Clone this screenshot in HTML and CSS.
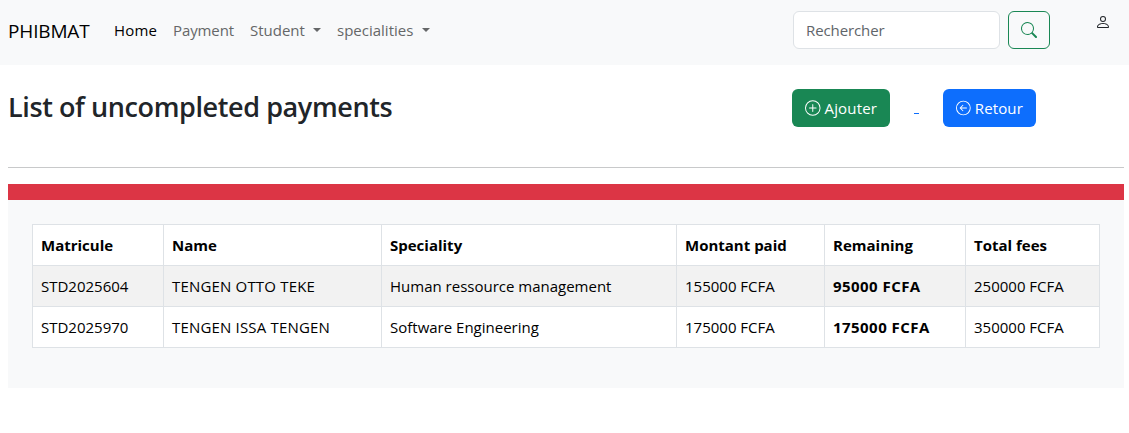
FILE: index.html
```html
<!DOCTYPE html>
<html lang="en">
<head>
<meta charset="utf-8">
<title>PHIBMAT</title>
<link rel="stylesheet" href="styles.css">
</head>
<body>
<nav class="navbar">
  <a class="brand">PHIBMAT</a>
  <div class="links">
    <a class="link active link-home">Home</a>
    <a class="link link-payment">Payment</a>
    <a class="link link-student">Student<i class="caret"></i></a>
    <a class="link">specialities<i class="caret"></i></a>
  </div>
  <form class="search">
    <div class="field">Rechercher</div>
    <button class="btn btn-search" type="button" aria-label="Rechercher">
      <svg width="16" height="16" viewBox="0 0 16 16" fill="currentColor"><path d="M11.742 10.344a6.5 6.5 0 1 0-1.397 1.398h-.001q.044.06.098.115l3.85 3.85a1 1 0 0 0 1.415-1.414l-3.85-3.85a1 1 0 0 0-.115-.1zM12 6.5a5.5 5.5 0 1 1-11 0 5.5 5.5 0 0 1 11 0"/></svg>
    </button>
  </form>
  <a class="user" aria-label="Account">
    <svg width="16" height="16" viewBox="0 0 16 16" fill="currentColor"><path d="M8 8a3 3 0 1 0 0-6 3 3 0 0 0 0 6m2-3a2 2 0 1 1-4 0 2 2 0 0 1 4 0m4 8c0 1-1 1-1 1H3s-1 0-1-1 1-4 6-4 6 3 6 4m-1-.004c-.001-.246-.154-.986-.832-1.664C11.516 10.68 10.289 10 8 10s-3.516.68-4.168 1.332c-.678.678-.83 1.418-.832 1.664z"/></svg>
  </a>
</nav>
<main class="page">
  <header class="head">
    <h1 class="title">List of uncompleted payments</h1>
    <div class="actions">
      <a class="btn btn-add"><svg width="16" height="16" viewBox="0 0 16 16" fill="currentColor"><path d="M8 15A7 7 0 1 1 8 1a7 7 0 0 1 0 14m0 1A8 8 0 1 0 8 0a8 8 0 0 0 0 16"/><path d="M8 4a.5.5 0 0 1 .5.5v3h3a.5.5 0 0 1 0 1h-3v3a.5.5 0 0 1-1 0v-3h-3a.5.5 0 0 1 0-1h3v-3A.5.5 0 0 1 8 4"/></svg><span>Ajouter</span></a>
      <a class="gap-link"></a>
      <a class="btn btn-back"><svg width="16" height="16" viewBox="0 0 16 16" fill="currentColor"><path fill-rule="evenodd" d="M1 8a7 7 0 1 0 14 0A7 7 0 0 0 1 8m15 0A8 8 0 1 1 0 8a8 8 0 0 1 16 0m-4.500-.5a.5.5 0 0 1 0 1H5.707l2.147 2.146a.5.5 0 0 1-.708.708l-3-3a.5.5 0 0 1 0-.708l3-3a.5.5 0 1 1 .708.708L5.707 7.500z"/></svg><span>Retour</span></a>
    </div>
  </header>
  <hr class="rule">
  <div class="bar"></div>
  <section class="panel">
    <table class="table">
      <colgroup><col class="c1"><col class="c2"><col class="c3"><col class="c4"><col class="c5"><col class="c6"></colgroup>
      <thead><tr><th>Matricule</th><th>Name</th><th>Speciality</th><th>Montant paid</th><th>Remaining</th><th>Total fees</th></tr></thead>
      <tbody>
        <tr class="odd"><td>STD2025604</td><td class="name">TENGEN OTTO TEKE</td><td>Human ressource management</td><td>155000 FCFA</td><td class="due">95000 FCFA</td><td>250000 FCFA</td></tr>
        <tr><td>STD2025970</td><td class="name">TENGEN ISSA TENGEN</td><td>Software Engineering</td><td>175000 FCFA</td><td class="due">175000 FCFA</td><td>350000 FCFA</td></tr>
      </tbody>
    </table>
  </section>
</main>
</body>
</html>
```
FILE: styles.css
```css
* { box-sizing: border-box; }
body { margin: 0; background: #fff; color: #212529; font: 15px/24px "Segoe UI", "Open Sans", "Noto Sans", sans-serif; }
.navbar { display: flex; align-items: center; height: 65px; padding: 0 18px 5px 8px; background: #f8f9fa; }
.brand { width: 98px; padding-top: 1px; font-size: 19px; line-height: 30px; letter-spacing: -0.15px; color: #000; }
.links { display: flex; flex: 1; }
.link { display: flex; align-items: center; padding: 8px; white-space: nowrap; color: #656768; }
.link-home { width: 59px; letter-spacing: 0.15px; }
.link-payment { width: 77px; letter-spacing: -0.1px; }
.link-student { width: 87px; }
.active { color: #000; }
.caret { margin-left: auto; border-top: 4px solid; border-left: 4px solid transparent; border-right: 4px solid transparent; }
.link:last-child .caret { margin-left: 9px; }
.search { display: flex; gap: 8px; }
.field { width: 207px; height: 38px; padding: 6px 12px; border: 1px solid #dee2e6; border-radius: 6px; background: #fff; color: #60656a; letter-spacing: -0.1px; }
.btn { display: flex; align-items: center; height: 38px; padding: 0 13px; border-radius: 6px; color: #fff; }
.btn span { margin-left: 4px; letter-spacing: 0.15px; }
.btn-search { width: 42px; padding: 0 12px; border: 1px solid #198754; background: transparent; color: #198754; }
.user { width: 16px; height: 16px; margin: 0 0 16px 45px; line-height: 0; color: #212529; }
.page { padding: 24px 5px 0 8px; }
.head { display: flex; justify-content: space-between; height: 78px; }
.title { margin: 0; font-size: 27px; line-height: 36px; font-weight: 600; letter-spacing: -0.4px; white-space: nowrap; }
.actions { display: flex; align-items: center; height: 38px; margin-right: 88px; }
.btn-add { width: 98px; background: #198754; }
.gap-link { width: 5px; height: 1px; margin: 11px 24px 0; background: #0d6efd; }
.btn-back { width: 93px; background: #0d6efd; }
.rule { height: 1px; margin: 0 0 16px; border: 0; background: #c8c9ca; }
.bar { height: 16px; background: #dc3545; }
.panel { height: 188px; padding: 24px; background: #f8f9fa; }
.table { width: 1067px; table-layout: fixed; border-collapse: collapse; background: #fff; color: #000; }
.c1 { width: 131px; }
.c2 { width: 218px; }
.c3 { width: 295px; }
.c4 { width: 148px; }
.c5 { width: 141px; }
.c6 { width: 134px; }
.table th, .table td { height: 41px; padding: 8px; border: 1px solid #dee2e6; text-align: left; white-space: nowrap; }
.table th, .table .due { font-weight: 700; }
.table .due { letter-spacing: 0.45px; }
.table .name { letter-spacing: 0.18px; }
.odd { background: #f2f2f2; }
```
